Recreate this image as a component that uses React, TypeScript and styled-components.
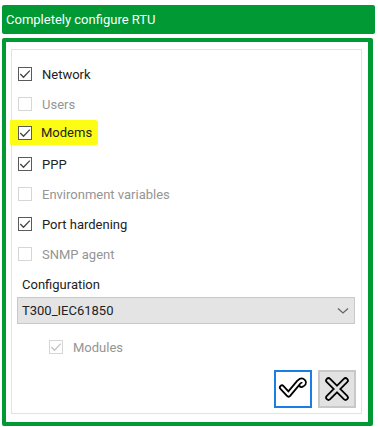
import React from "react";
import styled, { createGlobalStyle } from "styled-components";

const Global = createGlobalStyle`
  html, body { margin: 0; padding: 0; background: #ffffff; }
  body { font-family: Roboto, "Liberation Sans", Arial, sans-serif; }
`;

const Page = styled.div`
  width: 378px;
  height: 427px;
  padding: 5px 0 0 2px;
  box-sizing: border-box;
  display: flex;
  flex-direction: column;
  gap: 4px;
  overflow: hidden;
`;

const TitleBar = styled.div`
  width: 373px;
  height: 29px;
  box-sizing: border-box;
  background: #009933;
  border-radius: 2px;
  color: #ffffff;
  font-size: 13px;
  display: flex;
  align-items: center;
  padding-left: 4px;
`;

const Frame = styled.div`
  width: 371px;
  height: 388px;
  box-sizing: border-box;
  border: 4px solid #009933;
  border-right-width: 5px;
  border-radius: 2px;
  padding: 7px 6px 8px 5px;
  display: flex;
`;

const Panel = styled.div`
  flex: 1;
  border: 1px solid #e3e3e3;
  padding: 9px 6px 0 6px;
  display: flex;
  flex-direction: column;
`;

const Row = styled.div`
  height: 30px;
  display: flex;
  align-items: center;
`;

const Highlight = styled.span<{ $on?: boolean }>`
  display: inline-flex;
  align-items: center;
  gap: 9px;
  height: 25px;
  margin-left: -8px;
  padding: 0 6px 0 8px;
  margin-top: -3px;
  background: ${(p) => (p.$on ? "#fcfc14" : "transparent")};
  border-radius: ${(p) => (p.$on ? "1px 3px 2px 1px" : "0")};
`;

const Box = styled.span<{ $disabled?: boolean }>`
  width: 14px;
  height: 14px;
  box-sizing: border-box;
  border: 1px solid ${(p) => (p.$disabled ? "#d6d6d6" : "#5a5a5a")};
  background: #ffffff;
  display: inline-flex;
  align-items: center;
  justify-content: center;
  flex: none;
`;

const Label = styled.span<{ $disabled?: boolean }>`
  font-size: 13px;
  color: ${(p) => (p.$disabled ? "#959595" : "#222222")};
`;

const Plain = styled.span`
  display: inline-flex;
  align-items: center;
  gap: 10px;
`;

const SectionLabel = styled.div`
  font-size: 13px;
  color: #222222;
  margin: 8px 0 0 4px;
  height: 16px;
  line-height: 16px;
`;

const Select = styled.div`
  margin: 4px 0 0 -1px;
  height: 27px;
  box-sizing: border-box;
  background: #e4e4e4;
  border: 1px solid #c9c9c9;
  display: flex;
  align-items: center;
  justify-content: space-between;
  padding: 0 5px 0 4px;
  font-size: 13px;
  color: #222222;
`;

const SubRow = styled.div`
  height: 30px;
  margin-top: 8px;
  padding-left: 31px;
  display: flex;
  align-items: center;
  gap: 10px;
`;

const Buttons = styled.div`
  margin-top: 8px;
  display: flex;
  justify-content: flex-end;
  gap: 6px;
  padding-right: 0;
  margin-right: -1px;
`;

const IconButton = styled.button<{ $primary?: boolean }>`
  width: 38px;
  height: 38px;
  box-sizing: border-box;
  padding: 0;
  border: 2px solid ${(p) => (p.$primary ? "#1a7ee6" : "#c8c8c8")};
  background: ${(p) => (p.$primary ? "#ffffff" : "#e2e2e2")};
  display: flex;
  align-items: center;
  justify-content: center;
  cursor: pointer;
`;

const Tick = ({ color }: { color: string }) => (
  <svg width="12" height="12" viewBox="0 0 12 12">
    <polyline points="1.3,6 4.5,9.2 10.8,2.6" fill="none" stroke={color} strokeWidth="1.3" />
  </svg>
);

const CheckBox = ({ checked, disabled, tickColor }: { checked?: boolean; disabled?: boolean; tickColor?: string }) => (
  <Box $disabled={disabled}>{checked && <Tick color={tickColor || "#444"} />}</Box>
);

const checkPath = "M6 15.5 L12.5 22.5 L23 10 Q25.5 7.5 27.5 9.5 Q29 11.5 25.5 13";

const OkIcon = () => (
  <svg width="34" height="34" viewBox="0 0 34 34">
    <path d={checkPath} fill="none" stroke="#000" strokeWidth="6" strokeLinecap="round" strokeLinejoin="round" />
    <path d={checkPath} fill="none" stroke="#fff" strokeWidth="2.4" strokeLinecap="round" strokeLinejoin="round" />
  </svg>
);

const CancelIcon = () => (
  <svg width="34" height="34" viewBox="0 0 34 34">
    <g fill="none" strokeLinecap="round">
      <path d="M8.5 8.5 L25.5 25.5 M25.5 8.5 L8.5 25.5" stroke="#000" strokeWidth="6.5" />
      <path d="M8.5 8.5 L25.5 25.5 M25.5 8.5 L8.5 25.5" stroke="#e2e2e2" strokeWidth="3" />
    </g>
  </svg>
);

const Chevron = () => (
  <svg width="12" height="8" viewBox="0 0 12 8">
    <polyline points="1,1.5 6,6 11,1.5" fill="none" stroke="#666" strokeWidth="1.3" />
  </svg>
);

const items = [
  { label: "Network", checked: true, disabled: false },
  { label: "Users", checked: false, disabled: true },
  { label: "Modems", checked: true, disabled: false, highlight: true },
  { label: "PPP", checked: true, disabled: false },
  { label: "Environment variables", checked: false, disabled: true },
  { label: "Port hardening", checked: true, disabled: false },
  { label: "SNMP agent", checked: false, disabled: true },
];

export default function App() {
  return (
    <>
      <Global />
      <Page>
        <TitleBar>Completely configure RTU</TitleBar>
        <Frame>
          <Panel>
            {items.map((it) => (
              <Row key={it.label}>
                {it.highlight ? (
                  <Highlight $on>
                    <CheckBox checked={it.checked} disabled={it.disabled} />
                    <Label $disabled={it.disabled}>{it.label}</Label>
                  </Highlight>
                ) : (
                  <Plain>
                    <CheckBox checked={it.checked} disabled={it.disabled} />
                    <Label $disabled={it.disabled}>{it.label}</Label>
                  </Plain>
                )}
              </Row>
            ))}
            <SectionLabel>Configuration</SectionLabel>
            <Select>
              <span>T300_IEC61850</span>
              <Chevron />
            </Select>
            <SubRow>
              <CheckBox checked disabled tickColor="#c4c4c4" />
              <Label $disabled>Modules</Label>
            </SubRow>
            <Buttons>
              <IconButton $primary aria-label="OK">
                <OkIcon />
              </IconButton>
              <IconButton aria-label="Cancel">
                <CancelIcon />
              </IconButton>
            </Buttons>
          </Panel>
        </Frame>
      </Page>
    </>
  );
}
